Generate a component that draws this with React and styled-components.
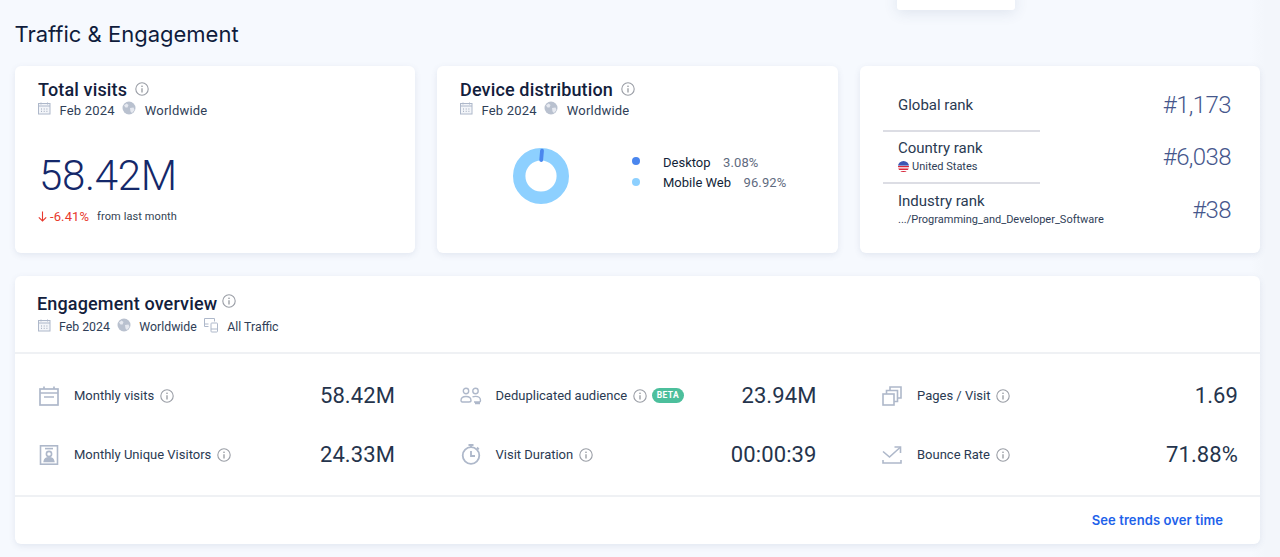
import React from "react";
import styled, { createGlobalStyle } from "styled-components";

const GlobalStyle = createGlobalStyle`
  html, body {
    margin: 0;
    padding: 0;
    background: #f6f9fe;
    font-family: Roboto, "Liberation Sans", sans-serif;
    color: #2a3a52;
  }
  * { box-sizing: border-box; }
`;

const ICON = "#aeb8ca";

function InfoIcon({ size = 14 }) {
  return (
    <svg width={size} height={size} viewBox="0 0 14 14" fill="none">
      <circle cx="7" cy="7" r="6.2" stroke="#9a9ea6" strokeWidth="1.1" />
      <circle cx="7" cy="4.2" r="0.8" fill="#8d9198" />
      <path d="M7 6.2v4.2" stroke="#8d9198" strokeWidth="1.2" />
    </svg>
  );
}

function CalendarIcon() {
  return (
    <svg width="13" height="13" viewBox="0 0 13 13" fill="none">
      <rect x="0.5" y="1.5" width="11.5" height="10.5" fill="#f3f5f9" stroke={ICON} />
      <path d="M0.5 4h11.5" stroke={ICON} />
      <path d="M3 0.5v2M9.5 0.5v2" stroke={ICON} />
      <path d="M3 7h1M5.7 7h1M8.4 7h1M3 9.3h1M5.7 9.3h1M8.4 9.3h1" stroke="#9aa5b8" />
    </svg>
  );
}

function GlobeIcon() {
  return (
    <svg width="14" height="14" viewBox="0 0 14 14">
      <circle cx="7" cy="7" r="6.5" fill="#b9c1cf" />
      <path d="M2 4.5 4.5 2.5 6.5 4 5.5 6.5 3.5 6.5zM8 7l3.5-.5L12.5 9 10 12 8.5 10.5z" fill="#e6e9f0" />
    </svg>
  );
}

function DevicesIcon() {
  return (
    <svg width="15" height="15" viewBox="0 0 15 15" fill="none" stroke={ICON}>
      <path d="M10.5 3.5v-3h-10v8h4" />
      <path d="M0.5 6h4" />
      <rect x="7" y="5" width="6.5" height="9" rx="0.8" />
      <path d="M7 11h6.5" />
    </svg>
  );
}

function VisitsIcon() {
  return (
    <svg width="20" height="20" viewBox="0 0 20 20" fill="none" stroke={ICON} strokeWidth="1.7">
      <rect x="1" y="3" width="18" height="16" />
      <path d="M1 7h18M5 11h10M5 .5v2.5M15 .5v2.5" />
    </svg>
  );
}

function UniqueIcon() {
  return (
    <svg width="20" height="20" viewBox="0 0 20 20" fill="none" stroke={ICON} strokeWidth="1.6">
      <rect x="1.5" y="0.8" width="17" height="18.4" />
      <path d="M6 3.6h8" />
      <circle cx="10" cy="9" r="2.6" />
      <path d="M5.2 16.5c.4-2.6 2.4-3.6 4.8-3.6s4.4 1 4.8 3.6z" fill={ICON} />
    </svg>
  );
}

function AudienceIcon() {
  return (
    <svg width="22" height="18" viewBox="0 0 22 18" fill="none" stroke={ICON} strokeWidth="1.4">
      <circle cx="6" cy="4" r="2.7" />
      <circle cx="15.5" cy="4" r="2.7" />
      <path d="M1 13.5c0-2.6 2.2-4 5-4s5 1.4 5 4c0 1-.8 1.5-2 1.5H3c-1.2 0-2-.5-2-1.5z" />
      <path d="M12.5 9.8c.9-.3 2-.4 3-.4 2.8 0 5 1.4 5 4 0 1-.8 1.6-2 1.6h-4.500M15 16.5h5" />
    </svg>
  );
}

function TimerIcon() {
  return (
    <svg width="20" height="21" viewBox="0 0 20 21" fill="none" stroke={ICON} strokeWidth="1.8">
      <circle cx="10" cy="11.5" r="8.3" />
      <path d="M7.5 1h5M10 1v2.5M16 3.5l1.8 1.8" />
      <path d="M10 7v5h4" />
    </svg>
  );
}

function PagesIcon() {
  return (
    <svg width="20" height="20" viewBox="0 0 20 20" fill="none" stroke={ICON} strokeWidth="1.6">
      <path d="M8 4.5V1h11v11h-3.500" />
      <path d="M4.5 8V4.5h11v11H12" />
      <rect x="1" y="8" width="11" height="11" />
    </svg>
  );
}

function BounceIcon() {
  return (
    <svg width="20" height="18" viewBox="0 0 20 18" fill="none" stroke={ICON} strokeWidth="1.6">
      <path d="M1 5.5 7.5 11 18 1.500" />
      <path d="M12.5 1h6v6" />
      <path d="M1 14v3h18v-3" />
    </svg>
  );
}

function FlagIcon() {
  return (
    <svg width="11" height="11" viewBox="0 0 11 11">
      <defs>
        <clipPath id="flagClip">
          <circle cx="5.5" cy="5.5" r="5.5" />
        </clipPath>
      </defs>
      <g clipPath="url(#flagClip)">
        <rect width="11" height="11" fill="#fff" />
        <path d="M0 5h11v1.3H0zM0 7.6h11v1.3H0zM0 10h11v1H0z" fill="#d8283c" />
        <rect width="11" height="4.6" fill="#3c57b4" />
      </g>
    </svg>
  );
}

function DownArrow() {
  return (
    <svg width="9" height="11" viewBox="0 0 9 11" fill="none" stroke="#e8382d" strokeWidth="1.1">
      <path d="M4.5 .5v9.500M.8 6.300l3.700 3.700 3.700-3.700" />
    </svg>
  );
}

function Donut() {
  return (
    <svg width="58" height="58" viewBox="0 0 58 58" fill="none">
      <circle cx="29" cy="29" r="21.8" stroke="#8dd0ff" strokeWidth="12.4" />
      <path d="M30 3.6 29.2 13" stroke="#4a86ee" strokeWidth="3.8" strokeLinecap="round" />
    </svg>
  );
}

export default function App() {
  return (
    <Page>
      <GlobalStyle />
      <Popup />
      <Title>Traffic &amp; Engagement</Title>
      <TopRow>
        <Card>
          <CardTitle>
            Total visits
            <InfoIcon />
          </CardTitle>
          <Meta>
            <MetaItem><CalendarIcon /><span>Feb 2024</span></MetaItem>
            <MetaItem><GlobeIcon /><span>Worldwide</span></MetaItem>
          </Meta>
          <BigNumber>58.42M</BigNumber>
          <Delta>
            <DeltaValue><DownArrow />-6.41%</DeltaValue>
            <DeltaNote>from last month</DeltaNote>
          </Delta>
        </Card>
        <Card>
          <CardTitle>
            Device distribution
            <InfoIcon />
          </CardTitle>
          <Meta>
            <MetaItem><CalendarIcon /><span>Feb 2024</span></MetaItem>
            <MetaItem><GlobeIcon /><span>Worldwide</span></MetaItem>
          </Meta>
          <DeviceBody>
            <DonutBox><Donut /></DonutBox>
            <Legend>
              <LegendRow>
                <Dot $color="#4a86ee" />
                <LegendName>Desktop</LegendName>
                <LegendValue>3.08%</LegendValue>
              </LegendRow>
              <LegendRow>
                <Dot $color="#8dd0ff" />
                <LegendName>Mobile Web</LegendName>
                <LegendValue>96.92%</LegendValue>
              </LegendRow>
            </Legend>
          </DeviceBody>
        </Card>
        <RankCard>
          <RankRow>
            <RankLabel>Global rank</RankLabel>
            <RankValue>#1,173</RankValue>
          </RankRow>
          <RankRow>
            <div>
              <RankLabel>Country rank</RankLabel>
              <RankSub><FlagIcon />United States</RankSub>
            </div>
            <RankValue>#6,038</RankValue>
          </RankRow>
          <RankRow>
            <div>
              <RankLabel>Industry rank</RankLabel>
              <RankSub>.../Programming_and_Developer_Software</RankSub>
            </div>
            <RankValue>#38</RankValue>
          </RankRow>
        </RankCard>
      </TopRow>
      <Overview>
        <OverviewHead>
          <OverviewTitle>
            Engagement overview
            <InfoIcon />
          </OverviewTitle>
          <OverviewMeta>
            <OverviewMetaItem><CalendarIcon /><span>Feb 2024</span></OverviewMetaItem>
            <OverviewMetaItem><GlobeIcon /><span>Worldwide</span></OverviewMetaItem>
            <OverviewMetaItem><DevicesIcon /><span>All Traffic</span></OverviewMetaItem>
          </OverviewMeta>
        </OverviewHead>
        <Metrics>
          <Metric>
            <MetricIcon><VisitsIcon /></MetricIcon>
            <MetricLabel>Monthly visits<InfoIcon /></MetricLabel>
            <MetricValue>58.42M</MetricValue>
          </Metric>
          <Metric>
            <MetricIcon><AudienceIcon /></MetricIcon>
            <MetricLabel>Deduplicated audience<InfoIcon /><Beta>BETA</Beta></MetricLabel>
            <MetricValue>23.94M</MetricValue>
          </Metric>
          <Metric>
            <MetricIcon><PagesIcon /></MetricIcon>
            <MetricLabel>Pages / Visit<InfoIcon /></MetricLabel>
            <MetricValue>1.69</MetricValue>
          </Metric>
          <Metric>
            <MetricIcon><UniqueIcon /></MetricIcon>
            <MetricLabel>Monthly Unique Visitors<InfoIcon /></MetricLabel>
            <MetricValue>24.33M</MetricValue>
          </Metric>
          <Metric>
            <MetricIcon><TimerIcon /></MetricIcon>
            <MetricLabel>Visit Duration<InfoIcon /></MetricLabel>
            <MetricValue>00:00:39</MetricValue>
          </Metric>
          <Metric>
            <MetricIcon><BounceIcon /></MetricIcon>
            <MetricLabel>Bounce Rate<InfoIcon /></MetricLabel>
            <MetricValue>71.88%</MetricValue>
          </Metric>
        </Metrics>
        <OverviewFoot>
          <TrendsLink>See trends over time</TrendsLink>
        </OverviewFoot>
      </Overview>
    </Page>
  );
}

const Page = styled.div`
  position: relative;
  height: 557px;
  width: 1280px;
  padding: 20px 20px 0 15px;
  overflow: hidden;
  background: linear-gradient(to right, #f6f9fe 1250px, #f3f6fb 1265px);
`;

const Popup = styled.div`
  position: absolute;
  top: -10px;
  left: 897px;
  width: 118px;
  height: 20px;
  background: #fff;
  border-radius: 3px;
  box-shadow: 0 3px 14px rgba(60, 80, 120, 0.12);
`;

const Title = styled.h1`
  margin: 0 0 17px -0.5px;
  height: 29px;
  line-height: 29px;
  font-family: Inter, Roboto, sans-serif;
  font-size: 22px;
  font-weight: 400;
  color: #0f1c3c;
`;

const TopRow = styled.div`
  display: grid;
  grid-template-columns: 400px 401px 400px;
  column-gap: 22px;
  height: 187px;
`;

const Card = styled.section`
  background: #fff;
  border-radius: 6px;
  box-shadow: 0 2px 6px rgba(80, 100, 140, 0.12);
  padding: 11px 23px 0;
`;

const CardTitle = styled.h2`
  display: flex;
  align-items: center;
  gap: 8px;
  margin: 0;
  height: 24px;
  font-size: 18px;
  font-weight: 500;
  letter-spacing: 0.15px;
  color: #12203c;
`;

const Meta = styled.div`
  display: flex;
  align-items: center;
  gap: 7.5px;
  height: 18px;
`;

const MetaItem = styled.span`
  display: inline-flex;
  align-items: center;
  gap: 8.5px;
  font-size: 13px;
  letter-spacing: 0.2px;
  color: #2f3e57;
  svg { position: relative; top: -2px; }
`;

const BigNumber = styled.div`
  margin-top: 31px;
  margin-left: 1px;
  height: 52px;
  line-height: 52px;
  font-size: 42px;
  font-weight: 300;
  letter-spacing: -0.3px;
  color: #14286a;
`;

const Delta = styled.div`
  display: flex;
  align-items: center;
  gap: 8px;
  margin-top: 7px;
`;

const DeltaValue = styled.span`
  display: inline-flex;
  align-items: center;
  gap: 3px;
  font-size: 13px;
  letter-spacing: 0.1px;
  color: #e8382d;
`;

const DeltaNote = styled.span`
  font-size: 11px;
  letter-spacing: 0.1px;
  color: #333f52;
`;

const DeviceBody = styled.div`
  display: flex;
  margin-top: 28px;
  padding-left: 52px;
`;

const DonutBox = styled.div`
  display: flex;
  width: 120px;
`;

const Legend = styled.div`
  display: flex;
  flex-direction: column;
  gap: 2.5px;
  margin-top: 6px;
`;

const LegendRow = styled.div`
  display: flex;
  align-items: center;
  height: 18px;
  font-size: 13px;
  white-space: nowrap;
`;

const Dot = styled.span`
  width: 8px;
  height: 8px;
  margin-right: 23px;
  margin-top: -2px;
  border-radius: 50%;
  background: ${(p) => p.$color};
`;

const LegendName = styled.span`
  margin-right: 12.5px;
  color: #131f38;
`;

const LegendValue = styled.span`
  letter-spacing: 0.1px;
  color: #5f6b80;
`;

const RankCard = styled.section`
  background: #fff;
  border-radius: 6px;
  box-shadow: 0 2px 6px rgba(80, 100, 140, 0.12);
  padding: 14px 29px 0 23px;
`;

const RankRow = styled.div`
  position: relative;
  display: flex;
  align-items: center;
  justify-content: space-between;
  height: 52px;
  padding: 0 0 2px 15px;
  &:last-child {
    padding-bottom: 0;
  }
  &:not(:last-child)::after {
    content: "";
    position: absolute;
    left: 0;
    bottom: 0;
    width: 157px;
    height: 2px;
    background: #dcdde4;
  }
`;

const RankLabel = styled.div`
  font-size: 15px;
  line-height: 18px;
  color: #2a3a52;
`;

const RankSub = styled.div`
  display: flex;
  align-items: center;
  gap: 3px;
  font-size: 11px;
  line-height: 19px;
  color: #2f3e57;
`;

const RankValue = styled.div`
  font-size: 24px;
  font-weight: 300;
  letter-spacing: -0.6px;
  color: #46578c;
`;

const Overview = styled.section`
  margin-top: 23px;
  width: 1245px;
  height: 268px;
  background: #fff;
  border-radius: 6px;
  box-shadow: 0 2px 6px rgba(80, 100, 140, 0.12);
`;

const OverviewHead = styled.header`
  height: 78px;
  padding: 15px 22px 0;
  border-bottom: 2px solid #eff1f4;
`;

const OverviewTitle = styled.h2`
  display: flex;
  align-items: center;
  gap: 5px;
  margin: 0;
  height: 24px;
  font-size: 18px;
  font-weight: 500;
  letter-spacing: 0.15px;
  color: #12203c;
  svg { position: relative; top: -2px; }
`;

const OverviewMeta = styled(Meta)`
  height: 24px;
  margin-left: 1px;
`;

const OverviewMetaItem = styled(MetaItem)`
  gap: 8px;
  font-size: 12.3px;
  letter-spacing: 0;
`;

const Metrics = styled.div`
  display: grid;
  grid-template-columns: repeat(3, 357px);
  grid-auto-rows: 59px;
  column-gap: 64.5px;
  align-items: center;
  height: 143px;
  padding: 12px 0 0 23px;
  border-bottom: 2px solid #eff1f4;
`;

const Metric = styled.div`
  display: flex;
  align-items: center;
`;

const MetricIcon = styled.span`
  display: flex;
  justify-content: center;
  width: 22px;
  margin-right: 14px;
`;

const MetricLabel = styled.span`
  display: flex;
  align-items: center;
  gap: 6px;
  flex: 1;
  font-size: 13px;
  color: #2a3a52;
`;

const MetricValue = styled.span`
  font-size: 22px;
  letter-spacing: 0.1px;
  color: #25344c;
`;

const Beta = styled.span`
  margin-left: -1px;
  padding: 0 4.5px;
  height: 15px;
  line-height: 15px;
  border-radius: 8px;
  font-size: 8.5px;
  font-weight: 700;
  letter-spacing: 0.4px;
  color: #fff;
  background: #4cbf9c;
`;

const OverviewFoot = styled.footer`
  display: flex;
  align-items: center;
  justify-content: flex-end;
  height: 47px;
  padding: 0 37px 2px 0;
`;

const TrendsLink = styled.a`
  font-family: Inter, Roboto, sans-serif;
  font-size: 13px;
  font-weight: 600;
  letter-spacing: 0.1px;
  color: #1e62ea;
`;
